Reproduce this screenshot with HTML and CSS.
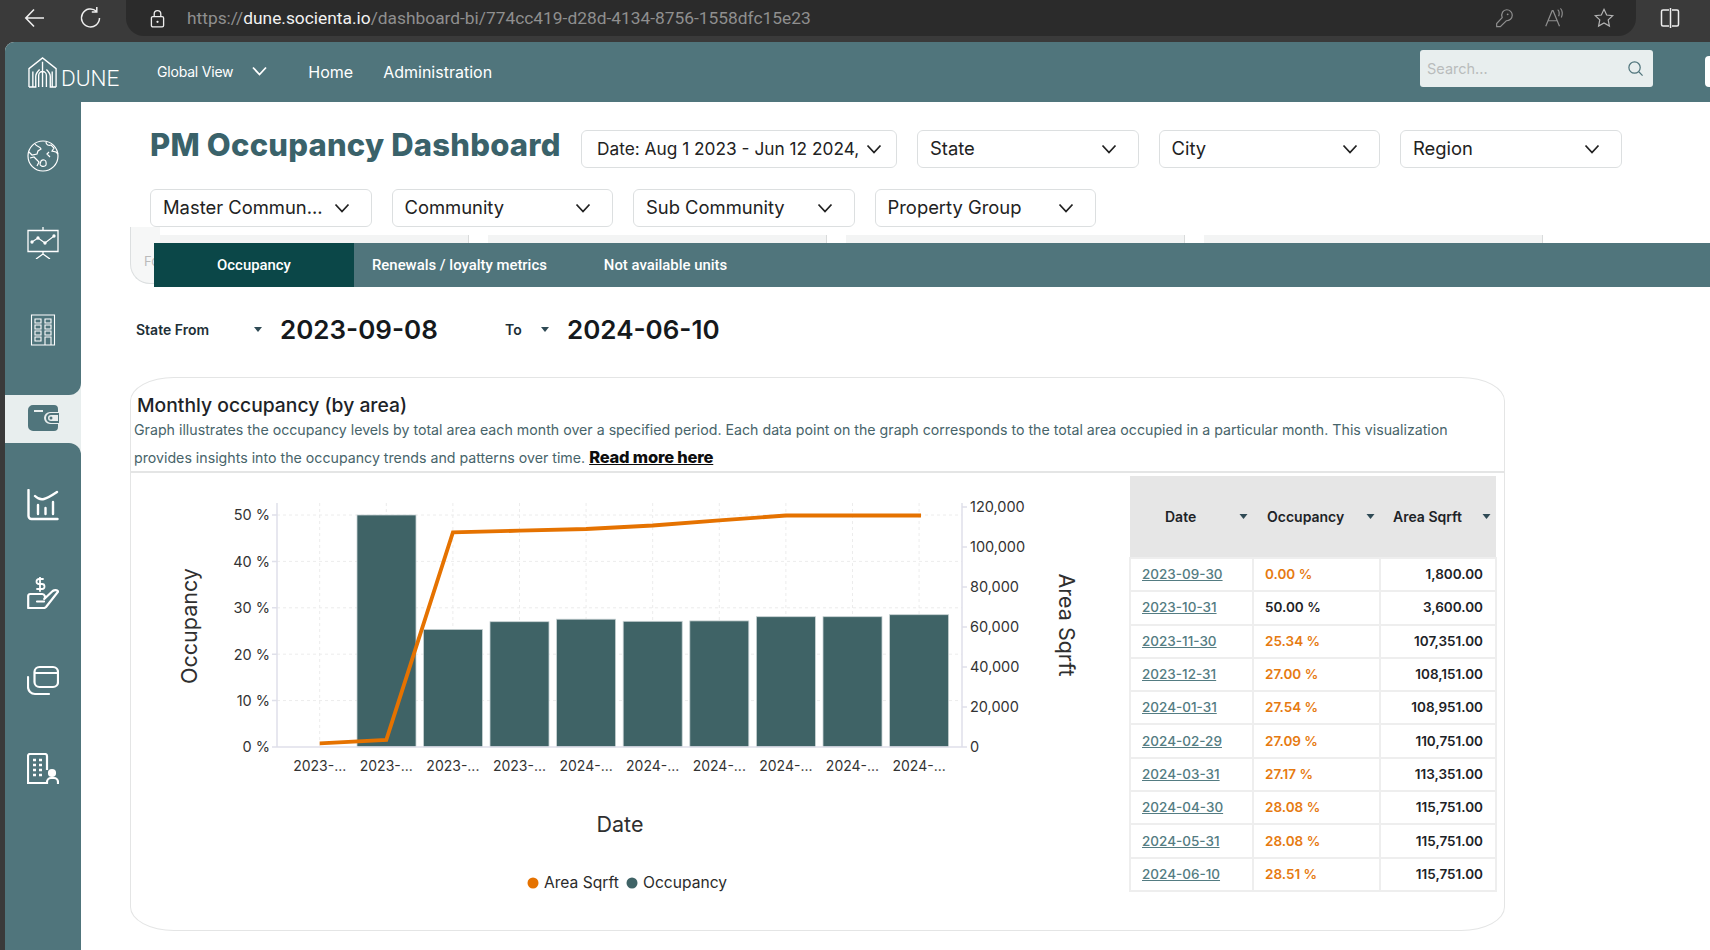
FILE: index.html
```html
<!DOCTYPE html>
<html lang="en">
<head>
<meta charset="utf-8">
<title>PM Occupancy Dashboard</title>
<link rel="stylesheet" href="styles.css">
</head>
<body>
<svg class="defs" width="0" height="0" aria-hidden="true">
  <symbol id="chev" viewBox="0 0 16 10"><path d="M1.5 1.5 8 8.5l6.5-7" fill="none" stroke="currentColor" stroke-width="1.8"/></symbol>
  <symbol id="caret" viewBox="0 0 8 5"><path d="M0 0h8L4 5z" fill="#2f4a55"/></symbol>
</svg>
<header class="chrome">
  <svg class="cicon back" viewBox="0 0 24 24"><path d="M21 12H3M11 3.5 2.8 12l8.2 8.5" fill="none" stroke="#eee" stroke-width="1.6"/></svg>
  <svg class="cicon reload" viewBox="0 0 24 24"><path d="M17.5 5.2A9 9 0 1 0 20.5 12M17.8 1v5h-5" fill="none" stroke="#eee" stroke-width="1.5"/></svg>
  <div class="urlbar">
    <svg class="lock" viewBox="0 0 16 20"><path d="M3 8h10a1.500 1.500 0 0 1 1.500 1.500v8A1.500 1.500 0 0 1 13 19H3a1.500 1.500 0 0 1-1.500-1.500v-8A1.500 1.500 0 0 1 3 8zM4.500 8V5a3.500 3.500 0 0 1 7 0v3" fill="none" stroke="#eee" stroke-width="1.400"/><circle cx="8" cy="13.500" r="1.200" fill="#eee"/></svg>
    <span class="url">https://<b>dune.socienta.io</b>/dashboard-bi/774cc419-d28d-4134-8756-1558dfc15e23</span>
    <div class="url-tools">
      <svg class="tool" viewBox="0 0 24 24"><path d="M15 3a6 6 0 0 1 6 6c0 3.500-3 6-6.500 6L8 21.500H4V18l6-6.500C8.500 7 11 3 15 3z" fill="none" stroke="#8f8f8f" stroke-width="1.300"/><circle cx="16" cy="8" r="1" fill="#8f8f8f"/></svg>
      <svg class="tool" viewBox="0 0 24 24"><path d="M3 21 10 4h1l7 17M5.500 15h10M16 3c2 1 2 5 1 7M19 1.500c2.500 2 2.500 7 1 10" fill="none" stroke="#8f8f8f" stroke-width="1.300"/></svg>
      <svg class="tool" viewBox="0 0 24 24"><path d="m12 2.500 2.900 6.200 6.600.8-4.900 4.600 1.300 6.700-5.900-3.300-5.900 3.300 1.300-6.700L2.500 9.500l6.600-.8z" fill="none" stroke="#b5b5b5" stroke-width="1.300"/></svg>
    </div>
  </div>
  <svg class="cicon split" viewBox="0 0 24 24"><path d="M11 4H5a1.500 1.500 0 0 0-1.500 1.500v13A1.500 1.500 0 0 0 5 20h6M14 4h5a1.500 1.500 0 0 1 1.500 1.500v13A1.500 1.500 0 0 1 19 20h-5M12.500 2v20" fill="none" stroke="#eee" stroke-width="1.500"/></svg>
</header>

<div class="app">
  <nav class="topbar">
    <div class="logo">
      <svg class="logo-mark" viewBox="0 0 32 32"><path d="M1 31V12L15 1l14 11v19M1 31h7V20c0-3 2-5 4-7M29 31h-6V20c0-3-2-5-4-7M15 5v26M11 31V19a4 4 0 0 1 8 0v12M5 31V15M25 31V15" fill="none" stroke="#fff" stroke-width="1.400"/></svg>
      <span class="logo-text">DUNE</span>
    </div>
    <span class="global">Global View</span>
    <svg class="global-chev"><use href="#chev"/></svg>
    <a class="nav-link">Home</a>
    <a class="nav-link">Administration</a>
    <div class="search">
      <span>Search...</span>
      <svg viewBox="0 0 18 18"><circle cx="8" cy="8" r="6" fill="none" stroke="#50757c" stroke-width="1.300"/><path d="m12.500 12.500 4 4" stroke="#50757c" stroke-width="1.300"/></svg>
    </div>
    <div class="edge-tab"></div>
  </nav>

  <div class="main">
    <aside class="sidebar">
      <div class="side-top">
        <svg class="side-icon" viewBox="0 0 32 32" fill="none" stroke="#fff" stroke-width="1.200"><circle cx="16" cy="16" r="15"/><path d="M8 4c2 3 5 2 6 5l-3 2-1 3-5 1-3-3M3 18l4-1 3 3 2 2-2 4M19 2c0 3 3 4 5 3l3 3-2 3 4 1 2 2M22 12l-2 2 3 3M14 21c2-2 5-1 5 1s1 3-1 4-5 0-5-2z"/></svg>
        <svg class="side-icon" viewBox="0 0 32 32" fill="none" stroke="#fff" stroke-width="1.300"><path d="M16 0v3M1 3.500h30v21H1zM16 25v2M9 32l7-5 7 5"/><path d="m5 15 6-4 7 5 9-7" stroke-width="1.100"/><circle cx="5" cy="15" r="1" fill="#fff"/><circle cx="11" cy="11" r="1" fill="#fff"/><circle cx="18" cy="16" r="1" fill="#fff"/><circle cx="27" cy="9" r="1" fill="#fff"/></svg>
        <svg class="side-icon" viewBox="0 0 32 32" fill="none" stroke="#fff" stroke-width="1.100"><path d="M4.500 1h23v30h-23zM8 5h6v4H8zM18 5h6v4h-6zM8 11h6v4H8zM18 11h6v4h-6zM8 17h6v4H8zM18 17h6v4h-6zM8 23h6v4H8zM18 23h6v8h-6z"/></svg>
      </div>
      <div class="side-active">
        <svg class="side-icon" viewBox="0 0 32 28"><path d="M6 1h21a4 4 0 0 1 4 4v3H23a6 6 0 0 0 0 12h8v3a4 4 0 0 1-4 4H6a5 5 0 0 1-5-5V6a5 5 0 0 1 5-5z" fill="#50757c"/><path d="M7 7h9" stroke="#e8eeee" stroke-width="2"/><path d="M24 10h8v8h-8a4 4 0 0 1 0-8z" fill="none" stroke="#50757c" stroke-width="2"/><circle cx="24" cy="14" r="1.500" fill="#50757c"/></svg>
      </div>
      <div class="side-bottom">
        <svg class="side-icon" viewBox="0 0 32 32" fill="none" stroke="#fff" stroke-width="2.400" stroke-linecap="round"><path d="M1.500 1v26a3 3 0 0 0 3 3h26M11 16v9M18.500 19v6M26 13v12M8 7c3 3 5 4 9 3s7-3 13-7"/></svg>
        <svg class="side-icon" viewBox="0 0 32 32" fill="none" stroke="#fff" stroke-width="2.200" stroke-linecap="round" stroke-linejoin="round"><path d="M1.200 31V19a2 2 0 0 1 2-2h12a3 3 0 0 1 2 5l8.500-8c2-1.500 4.500-1 5.500.5L19 30c-.5.500-1 1-2 1zM10 24.500h7"/><path d="M16 2h-4a2 2 0 0 0 0 5h3a2 2 0 0 1 0 5h-5M13 0v14" stroke-width="1.800"/></svg>
        <svg class="side-icon" viewBox="0 0 32 32" fill="none" stroke="#fff" stroke-width="2.200" stroke-linecap="round"><rect x="7.500" y="2" width="23.500" height="20" rx="5"/><path d="M8 8h22M1 12v10a7 7 0 0 0 7 7h14"/></svg>
        <svg class="side-icon" viewBox="0 0 32 32" fill="none" stroke="#fff" stroke-width="2.200"><path d="M20 17V3a2 2 0 0 0-2-2H3a2 2 0 0 0-2 2v27h18"/><path d="M6 7h3M12 7h3M6 12h3M12 12h3M6 17h3M12 17h3M6 22h3M12 22h3" stroke-width="2.600"/><circle cx="25" cy="20" r="3" fill="#fff"/><path d="M20 31v-2a4 4 0 0 1 4-4h3a4 4 0 0 1 4 4v2"/></svg>
      </div>
    </aside>

    <main class="content">
      <div class="title-filters">
        <h1 class="page-title">PM Occupancy Dashboard</h1>
        <div class="filter f-date"><span>Date: Aug 1 2023 - Jun 12 2024,</span><svg class="chev"><use href="#chev"/></svg></div>
        <div class="filter"><span>State</span><svg class="chev"><use href="#chev"/></svg></div>
        <div class="filter"><span>City</span><svg class="chev"><use href="#chev"/></svg></div>
        <div class="filter"><span>Region</span><svg class="chev"><use href="#chev"/></svg></div>
        <div class="filter"><span>Master Commun...</span><svg class="chev"><use href="#chev"/></svg></div>
        <div class="filter"><span>Community</span><svg class="chev"><use href="#chev"/></svg></div>
        <div class="filter"><span>Sub Community</span><svg class="chev"><use href="#chev"/></svg></div>
        <div class="filter"><span>Property Group</span><svg class="chev"><use href="#chev"/></svg></div>
      </div>

      <div class="tabs-zone">
        <div class="ghost-left"><span>Fo</span></div>
        <div class="ghost-row">
          <div class="ghost-card"></div>
          <div class="ghost-card"></div>
          <div class="ghost-card"></div>
          <div class="ghost-card"></div>
        </div>
        <div class="tabs">
          <span class="tab tab-active">Occupancy</span>
          <span class="tab tab-renew">Renewals / loyalty metrics</span>
          <span class="tab">Not available units</span>
        </div>
      </div>

      <div class="date-row">
        <span class="date-label from-label">State From</span>
        <svg class="caret"><use href="#caret"/></svg>
        <span class="date-value from-value">2023-09-08</span>
        <span class="date-label to-label">To</span>
        <svg class="caret"><use href="#caret"/></svg>
        <span class="date-value">2024-06-10</span>
      </div>

      <section class="card">
        <div class="card-head">
          <h2 class="card-title">Monthly occupancy (by area)</h2>
          <p class="card-desc">Graph illustrates the occupancy levels by total area each month over a specified period. Each data point on the graph corresponds to the total area occupied in a particular month. This visualization<br>provides insights into the occupancy trends and patterns over time. <a class="read-more">Read more here</a></p>
        </div>
        <div class="card-body">
          <svg class="chart" viewBox="131 473 998 456" width="998" height="456">
            <g class="grid">
              <path d="M277 515H962M277 561.400H962M277 607.800H962M277 654.200H962M277 700.600H962"/>
              <path d="M319.700 503V747M386.300 503V747M452.900 503V747M519.500 503V747M586.100 503V747M652.700 503V747M719.300 503V747M785.900 503V747M852.500 503V747M919.100 503V747"/>
            </g>
            <g class="bars">
              <rect x="357" y="515" width="59" height="232"/>
              <rect x="423.500" y="629.400" width="59" height="117.600"/>
              <rect x="490" y="621.700" width="59" height="125.300"/>
              <rect x="556.600" y="619.200" width="59" height="127.800"/>
              <rect x="623.200" y="621.300" width="59" height="125.700"/>
              <rect x="689.800" y="620.900" width="59" height="126.100"/>
              <rect x="756.400" y="616.700" width="59" height="130.300"/>
              <rect x="823" y="616.700" width="59" height="130.300"/>
              <rect x="889.600" y="614.700" width="59" height="132.300"/>
            </g>
            <path class="axis" d="M277 503V747H962V503M272 515H277M272 561.400H277M272 607.800H277M272 654.200H277M272 700.600H277M272 747H277M962 507H967M962 547H967M962 587H967M962 627H967M962 667H967M962 707H967M962 747H967"/>
            <polyline class="line" points="319.700,743.400 386.300,739.800 452.900,532.300 519.500,530.700 586.100,529 652.700,525.500 719.300,520.300 785.900,515.500 852.500,515.500 921,515.500"/>
            <g class="tick tick-end">
              <text x="270" y="520">50 %</text><text x="270" y="567">40 %</text><text x="270" y="613">30 %</text><text x="270" y="660">20 %</text><text x="270" y="706">10 %</text><text x="270" y="752">0 %</text>
            </g>
            <g class="tick">
              <text x="970" y="512">120,000</text><text x="970" y="552">100,000</text><text x="970" y="592">80,000</text><text x="970" y="632">60,000</text><text x="970" y="672">40,000</text><text x="970" y="712">20,000</text><text x="970" y="752">0</text>
            </g>
            <g class="tick tick-mid">
              <text x="319.700" y="771">2023-...</text><text x="386.300" y="771">2023-...</text><text x="452.900" y="771">2023-...</text><text x="519.500" y="771">2023-...</text><text x="586.100" y="771">2024-...</text><text x="652.700" y="771">2024-...</text><text x="719.300" y="771">2024-...</text><text x="785.900" y="771">2024-...</text><text x="852.500" y="771">2024-...</text><text x="919.100" y="771">2024-...</text>
            </g>
            <text class="axis-title" x="620" y="832" text-anchor="middle">Date</text>
            <text class="axis-title" transform="translate(197 626) rotate(-90)" text-anchor="middle">Occupancy</text>
            <text class="axis-title" transform="translate(1059 625) rotate(90)" text-anchor="middle">Area Sqrft</text>
            <circle cx="533" cy="883" r="5.500" fill="#e57200"/>
            <text class="legend" x="544" y="888">Area Sqrft</text>
            <circle cx="632" cy="883" r="5.500" fill="#3f6366"/>
            <text class="legend" x="643" y="888">Occupancy</text>
          </svg>
          <table class="data">
            <thead>
              <tr>
                <th class="col-date"><span class="th-in th-center">Date<svg class="caret"><use href="#caret"/></svg></span></th>
                <th class="col-occ"><span class="th-in">Occupancy<svg class="caret"><use href="#caret"/></svg></span></th>
                <th class="col-area"><span class="th-in">Area Sqrft<svg class="caret"><use href="#caret"/></svg></span></th>
              </tr>
            </thead>
            <tbody>
              <tr><td><a>2023-09-30</a></td><td class="warn">0.00 %</td><td class="num">1,800.00</td></tr>
              <tr><td><a>2023-10-31</a></td><td class="ok">50.00 %</td><td class="num">3,600.00</td></tr>
              <tr><td><a>2023-11-30</a></td><td class="warn">25.34 %</td><td class="num">107,351.00</td></tr>
              <tr><td><a>2023-12-31</a></td><td class="warn">27.00 %</td><td class="num">108,151.00</td></tr>
              <tr><td><a>2024-01-31</a></td><td class="warn">27.54 %</td><td class="num">108,951.00</td></tr>
              <tr><td><a>2024-02-29</a></td><td class="warn">27.09 %</td><td class="num">110,751.00</td></tr>
              <tr><td><a>2024-03-31</a></td><td class="warn">27.17 %</td><td class="num">113,351.00</td></tr>
              <tr><td><a>2024-04-30</a></td><td class="warn">28.08 %</td><td class="num">115,751.00</td></tr>
              <tr><td><a>2024-05-31</a></td><td class="warn">28.08 %</td><td class="num">115,751.00</td></tr>
              <tr><td><a>2024-06-10</a></td><td class="warn">28.51 %</td><td class="num">115,751.00</td></tr>
            </tbody>
          </table>
        </div>
      </section>
    </main>
  </div>
</div>
</body>
</html>
```
FILE: styles.css
```css
* { box-sizing: border-box; }
html, body { margin: 0; height: 950px; overflow: hidden; }
body { background: #3a3a3a; font-family: Inter, "Open Sans", sans-serif; color: #1d2327; }
.defs { position: absolute; }

/* browser chrome */
.chrome { height: 42px; display: flex; align-items: flex-start; position: relative; }
.cicon { width: 24px; height: 24px; flex: none; margin-top: 6px; }
.back { margin-left: 23px; }
.reload { margin-left: 32px; }
.urlbar { width: 1510px; height: 36px; margin-left: 23px; background: #2b2b2b; border-radius: 0 0 18px 18px; display: flex; align-items: center; padding-left: 24px; }
.lock { width: 15px; height: 19px; flex: none; }
.url { margin-left: 22px; font: 400 17.350px Roboto, sans-serif; color: #8f8f8f; white-space: nowrap; }
.url b { font-weight: 400; color: #f2f2f2; }
.url-tools { margin-left: auto; display: flex; gap: 28px; padding-right: 21px; }
.tool { width: 22px; height: 22px; }
.split { margin-left: 22px; }

/* app */
.app { margin-left: 5px; height: 908px; display: flex; flex-direction: column; background: #fff; border-top-left-radius: 9px; overflow: hidden; }
.topbar { height: 60px; flex: none; background: #50757c; display: flex; align-items: center; color: #fff; position: relative; }
.logo { display: flex; align-items: flex-end; margin-left: 22px; width: 97px; height: 32px; }
.logo-mark { width: 33px; height: 31px; flex: none; }
.logo-text { font: 300 22.500px Roboto, sans-serif; line-height: 20px; letter-spacing: 0; margin-left: 1px; }
.global { margin-left: 33px; font-size: 14px; margin-top: -2px; letter-spacing: -.2px; }
.global-chev { width: 17px; height: 10px; margin: -2px 0 0 18px; }
.nav-link { font-size: 16px; margin-left: 30px; }
.global-chev + .nav-link { margin-left: 40px; }
.search { margin-left: auto; margin-right: 57px; margin-top: -7px; width: 233px; height: 37px; background: #e8eeee; border-radius: 3px; display: flex; align-items: center; justify-content: space-between; padding: 0 9px 0 7px; font-size: 14.500px; color: #b9bcbc; }
.search svg { width: 17px; height: 17px; }
.edge-tab { position: absolute; right: 0; top: 14px; width: 5px; height: 31px; background: #fff; border-radius: 4px 0 0 4px; }

.main { flex: 1; display: flex; min-height: 0; }
.sidebar { width: 76px; flex: none; background: #e8eeee; display: flex; flex-direction: column; }
.side-icon { width: 32px; height: 32px; display: block; flex: none; }
.side-top { height: 293px; background: #50757c; border-bottom-right-radius: 12px; display: flex; flex-direction: column; align-items: center; padding-top: 38px; gap: 55px; }
.side-active { height: 48px; display: flex; align-items: center; justify-content: center; }
.side-active .side-icon { height: 28px; margin-top: -2px; }
.side-bottom { flex: 1; background: #50757c; border-top-right-radius: 12px; display: flex; flex-direction: column; align-items: center; padding-top: 46px; gap: 56px; }

.content { flex: 1; min-width: 0; background: #fff; }
.title-filters { display: flex; flex-wrap: wrap; align-items: center; gap: 21px 20px; padding: 28px 0 0 69px; height: 125px; }
.page-title { width: 411px; margin: -8px 0 0; font-size: 31px; font-weight: 800; color: #3a626a; letter-spacing: .2px; white-space: nowrap; line-height: 38px; }
.filter { width: 221.500px; height: 38px; border: 1px solid #dcdfe0; border-radius: 6px; display: flex; align-items: center; justify-content: space-between; padding: 0 21px 2px 12px; font-size: 18.400px; color: #222; background: #fff; white-space: nowrap; }
.f-date { width: 316px; padding: 0 14px 2px 15px; font-size: 17.300px; }
.chev { width: 16px; height: 10px; flex: none; color: #222; margin-top: 2px; }

.tabs-zone { position: relative; margin-left: 49px; height: 60px; }
.ghost-left { position: absolute; left: 0; top: 0; width: 30px; height: 57px; background: #f6f7f7; border: 1px solid #dcdfe0; border-top: 0; border-right: 0; border-bottom-left-radius: 20px; padding: 26px 0 0 13px; font-size: 13px; color: #bbb; }
.ghost-row { height: 16px; padding-top: 8px; display: flex; gap: 19px; }
.ghost-card { width: 339px; background: #f3f4f4; border-right: 1px solid #d9dbdb; }
.tabs { position: relative; margin-left: 24px; height: 44px; background: #50757c; display: flex; align-items: center; color: #fff; font: 500 14.900px Roboto, sans-serif; }
.tab { display: flex; align-items: center; height: 100%; }
.tab-active { width: 200px; justify-content: center; background: #0b4748; }
.tab-renew { margin: 0 57px 0 18px; }

.date-row { height: 90px; padding-bottom: 6px; margin-left: 55px; display: flex; align-items: center; }
.date-label { font-size: 14px; font-weight: 600; color: #1d2f36; }
.from-label { width: 118px; }
.caret { width: 8px; height: 5px; flex: none; }
.date-value { font-size: 26px; font-weight: 600; color: #15191c; margin-left: 18px; }
.from-value { width: 225px; }
.to-label { width: 36px; }

.card { width: 1375px; height: 554px; margin-left: 49px; border: 1px solid #e4e5e5; border-radius: 44px / 24px; overflow: hidden; }
.card-head { height: 95px; padding: 15px 0 0 3px; border-bottom: 2px solid #e4e5e5; }
.card-title { margin: 0 0 0 3px; font-size: 19.300px; font-weight: 500; color: #1d2327; line-height: 25px; }
.card-desc { margin: -1px 0 0; font-size: 14.200px; line-height: 26.500px; color: #47646a; white-space: nowrap; }
.read-more { font-size: 16.500px; font-weight: 800; color: #0d0d0d; text-decoration: underline; letter-spacing: -.2px; }
.card-body { display: flex; align-items: flex-start; }
.chart { flex: none; display: block; }
.grid path { stroke: #ececec; stroke-dasharray: 3 3; fill: none; }
.bars rect { fill: #3f6366; stroke: #c9d3d4; stroke-width: .8; }
.axis { fill: none; stroke: #dfe0ea; stroke-width: 1.500; }
.line { fill: none; stroke: #e57200; stroke-width: 3.800; }
.tick text { font-size: 14.500px; fill: #333; }
.tick-end text { text-anchor: end; }
.tick-mid text { text-anchor: middle; font-size: 14px; }
.axis-title { font-size: 21.500px; fill: #2f2f2f; }
.legend { font-size: 15.600px; fill: #2b2b2b; }

.data { width: 366px; margin-top: 3px; border-collapse: collapse; table-layout: fixed; font-size: 13.500px; flex: none; }
.data th { height: 82px; background: #e6e6e6; border: 0; padding: 0; font-weight: 600; color: #1d2327; font-size: 14px; }
.data td { height: 33.300px; border: 2px solid #eee; padding: 0 12px 1px 11px; font-weight: 600; white-space: nowrap; }
.col-date { width: 123px; }
.col-occ { width: 127px; }
.col-area { width: 116px; }
.th-in { display: flex; align-items: center; justify-content: space-between; padding: 0 5px 0 14px; }
.th-in .caret { width: 9px; }
.th-center { padding-left: 35px; }
.col-area .th-in { padding-left: 13px; }
.data td a { color: #547c82; text-decoration: underline; font-weight: 500; }
.warn { color: #e67a10; }
.ok { color: #1d2327; }
.num { text-align: right; }
```
